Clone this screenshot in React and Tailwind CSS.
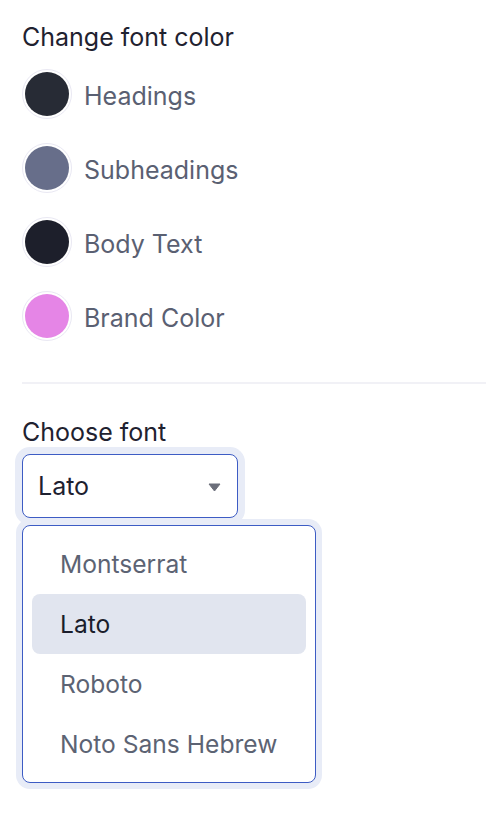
import { useState } from 'react';

const colors = [
  { label: 'Headings', hex: '#272b35' },
  { label: 'Subheadings', hex: '#676e8a' },
  { label: 'Body Text', hex: '#1d1f2b' },
  { label: 'Brand Color', hex: '#e585e6' },
];

const fonts = ['Montserrat', 'Lato', 'Roboto', 'Noto Sans Hebrew'];

export default function App() {
  const [selected, setSelected] = useState('Lato');

  return (
    <div className="min-h-screen bg-white pl-[22px] pr-[6px] pt-[22px] font-['Inter',sans-serif]">
      <h2 className="text-[25px] leading-[30px] text-[#1f2230]">Change font color</h2>

      <div className="mt-[17px] flex flex-col gap-[24px]">
        {colors.map((c) => (
          <div key={c.label} className="flex items-center gap-[12px]">
            <div className="w-[50px] h-[50px] rounded-full border border-[#e9e8f3] p-[2px] bg-white">
              <div className="w-full h-full rounded-full" style={{ backgroundColor: c.hex }} />
            </div>
            <span className="mt-[3px] text-[25px] leading-[30px] text-[#5a6072]">{c.label}</span>
          </div>
        ))}
      </div>

      <div className="mt-[41px] h-[2px] bg-[#f1f1f6]" />

      <h2 className="mt-[33px] text-[25px] leading-[30px] text-[#1f2230]">Choose font</h2>

      <button className="mt-[7px] w-[216px] h-[64px] flex items-center justify-between pl-[15px] pr-[16px] rounded-lg border border-[#3d5cc4] bg-white shadow-[0_0_0_7px_#e8ecf7]">
        <span className="text-[25px] leading-[30px] text-[#1e2130]">{selected}</span>
        <svg width="13" height="9" viewBox="0 0 13 9" className="mt-[2px]">
          <path d="M1 1h11L6.5 8z" fill="#6b6e7a" stroke="#6b6e7a" strokeWidth="1" strokeLinejoin="round" />
        </svg>
      </button>

      <div className="relative mt-[7px] w-[294px] rounded-lg border border-[#3d5cc4] bg-white py-[8px] px-[9px] shadow-[0_0_0_6px_#e8ecf7]">
        {fonts.map((f) => (
          <div
            key={f}
            onClick={() => setSelected(f)}
            className={`h-[60px] flex items-center pl-[28px] rounded-lg text-[24.6px] ${
              f === selected ? 'bg-[#e1e5ef] text-[#1a1d2b]' : 'text-[#5c6373]'
            }`}
          >
            {f}
          </div>
        ))}
      </div>
    </div>
  );
}
